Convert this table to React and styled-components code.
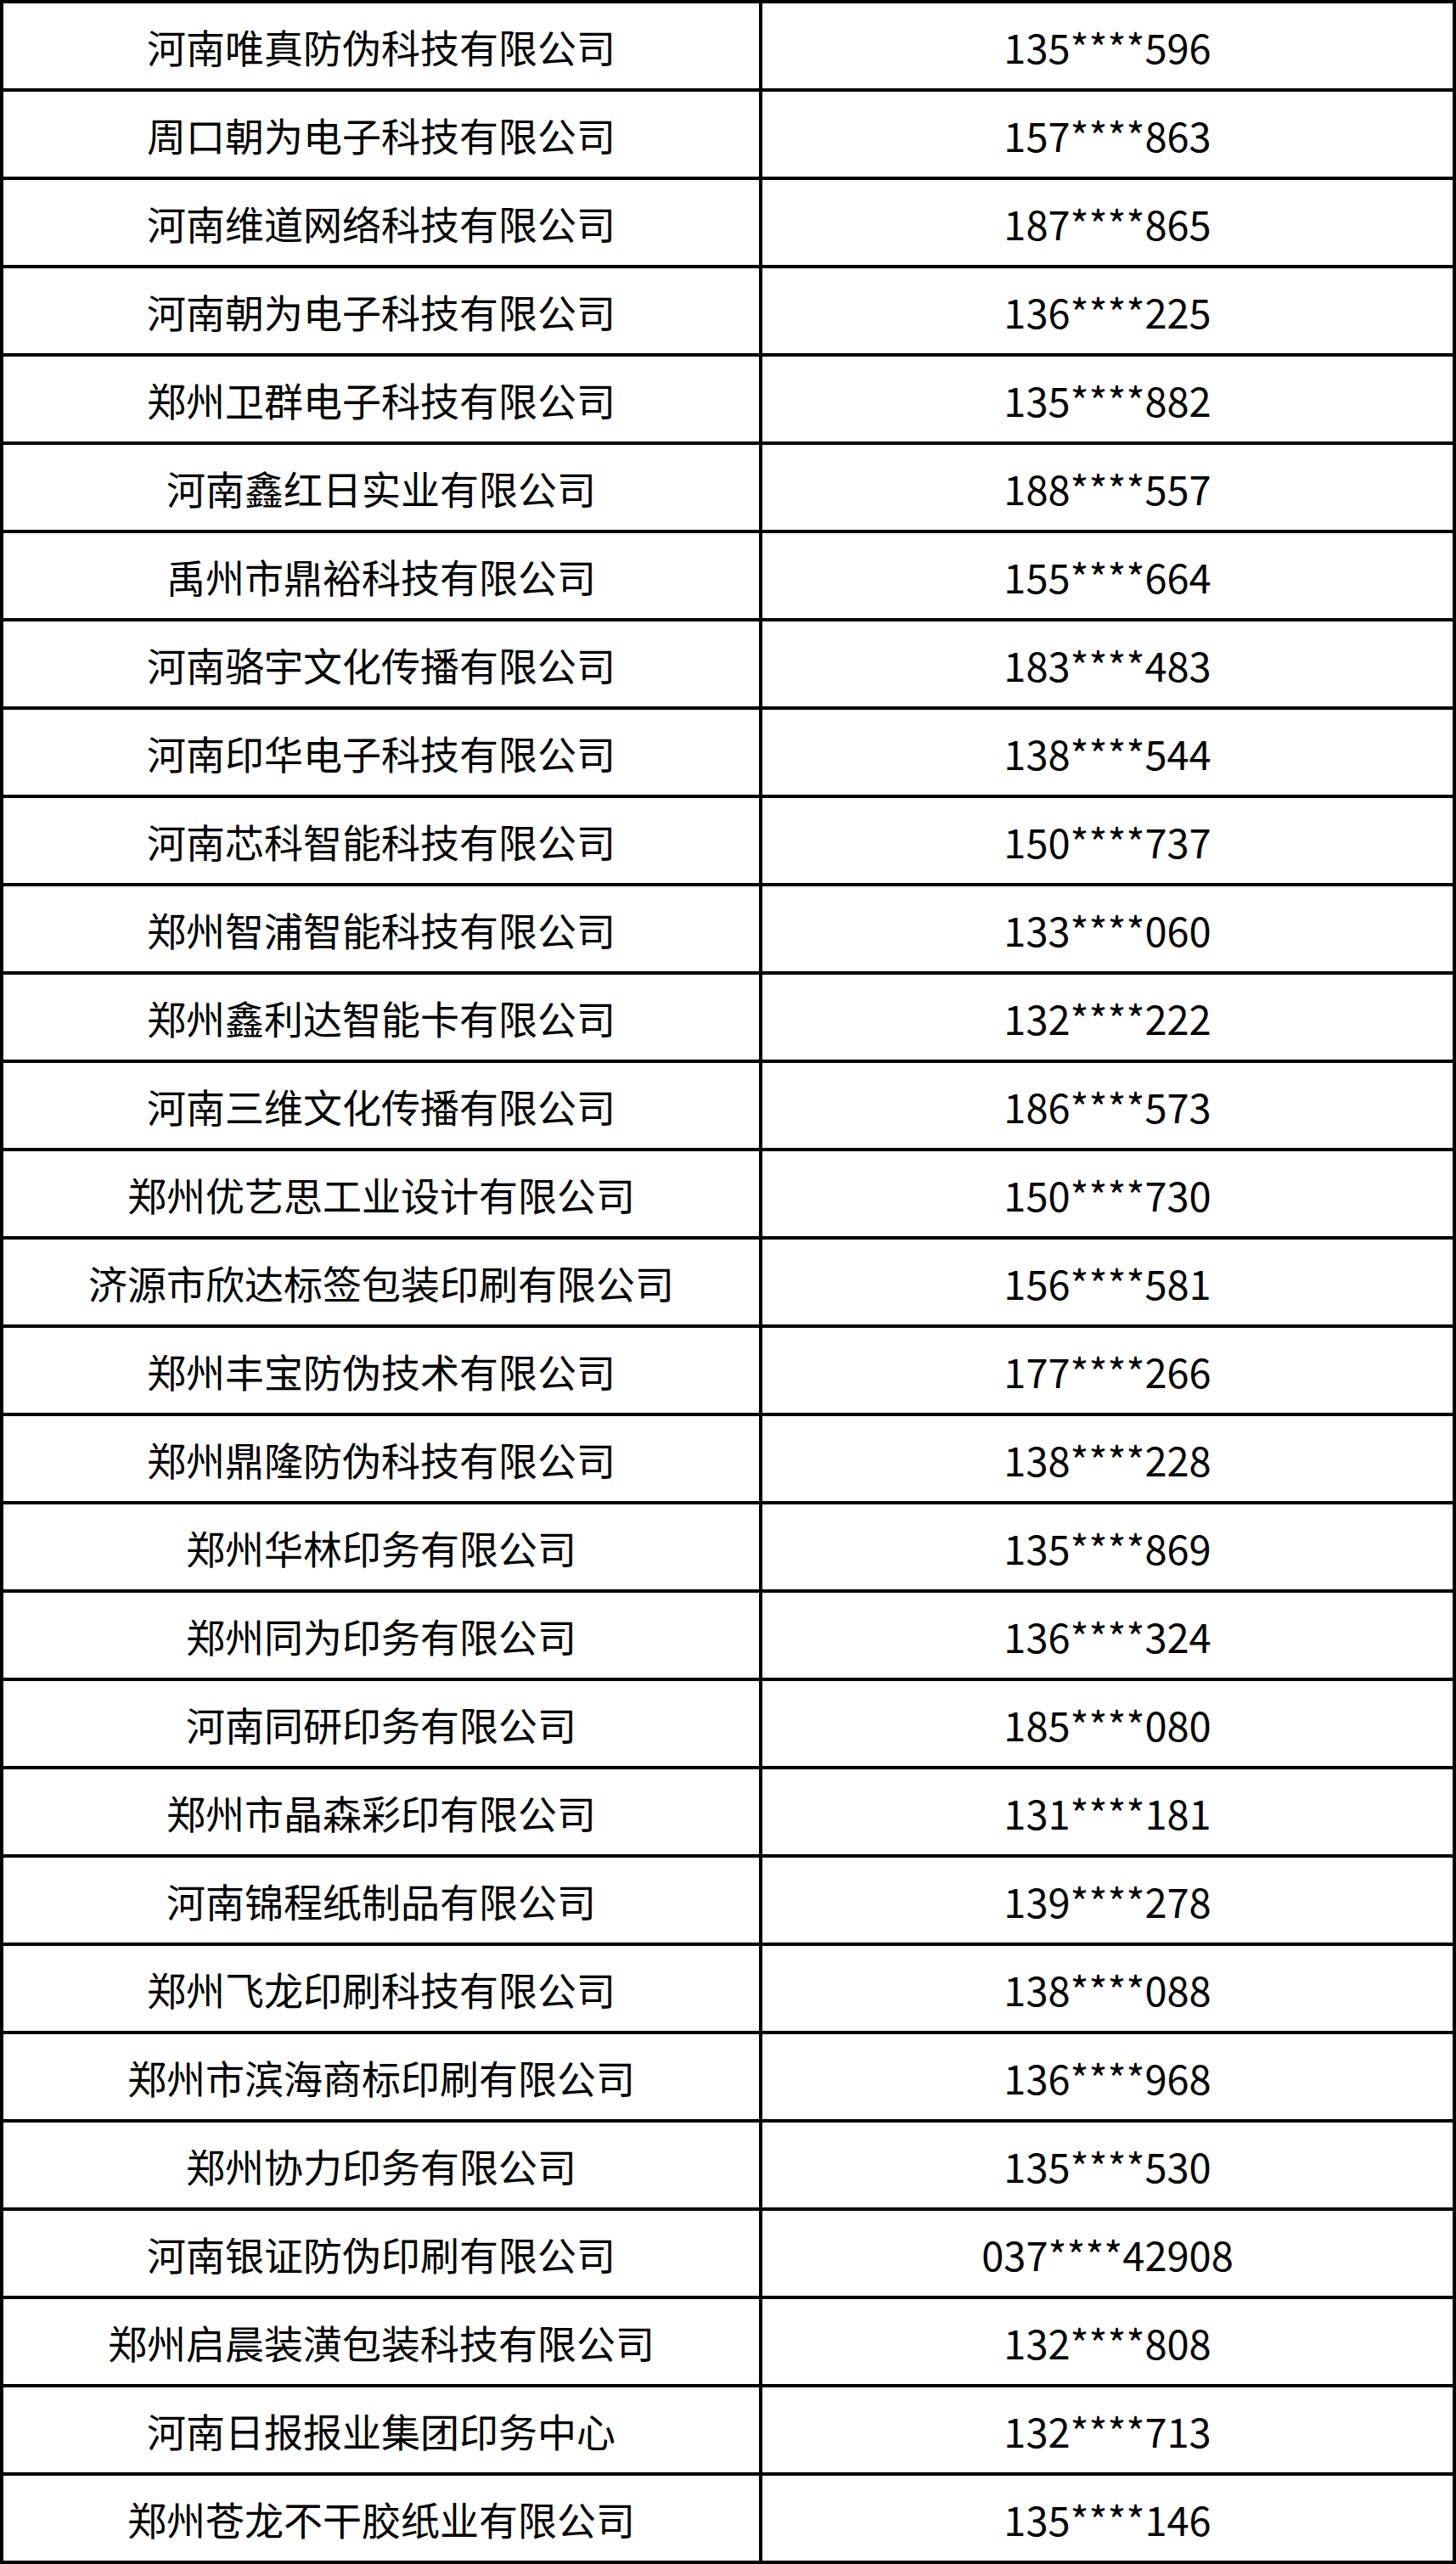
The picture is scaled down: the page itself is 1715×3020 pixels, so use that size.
import React from "react";
import styled, { createGlobalStyle } from "styled-components";

const rows = [
  ["河南唯真防伪科技有限公司", "135****596"],
  ["周口朝为电子科技有限公司", "157****863"],
  ["河南维道网络科技有限公司", "187****865"],
  ["河南朝为电子科技有限公司", "136****225"],
  ["郑州卫群电子科技有限公司", "135****882"],
  ["河南鑫红日实业有限公司", "188****557"],
  ["禹州市鼎裕科技有限公司", "155****664"],
  ["河南骆宇文化传播有限公司", "183****483"],
  ["河南印华电子科技有限公司", "138****544"],
  ["河南芯科智能科技有限公司", "150****737"],
  ["郑州智浦智能科技有限公司", "133****060"],
  ["郑州鑫利达智能卡有限公司", "132****222"],
  ["河南三维文化传播有限公司", "186****573"],
  ["郑州优艺思工业设计有限公司", "150****730"],
  ["济源市欣达标签包装印刷有限公司", "156****581"],
  ["郑州丰宝防伪技术有限公司", "177****266"],
  ["郑州鼎隆防伪科技有限公司", "138****228"],
  ["郑州华林印务有限公司", "135****869"],
  ["郑州同为印务有限公司", "136****324"],
  ["河南同研印务有限公司", "185****080"],
  ["郑州市晶森彩印有限公司", "131****181"],
  ["河南锦程纸制品有限公司", "139****278"],
  ["郑州飞龙印刷科技有限公司", "138****088"],
  ["郑州市滨海商标印刷有限公司", "136****968"],
  ["郑州协力印务有限公司", "135****530"],
  ["河南银证防伪印刷有限公司", "037****42908"],
  ["郑州启晨装潢包装科技有限公司", "132****808"],
  ["河南日报报业集团印务中心", "132****713"],
  ["郑州苍龙不干胶纸业有限公司", "135****146"],
];

const GlobalStyle = createGlobalStyle`
  body {
    margin: 0;
    background: #fff;
  }
`;

const Table = styled.div`
  display: grid;
  grid-template-columns: 890px 813px;
  grid-auto-rows: 100px;
  gap: 4px;
  padding: 4px;
  width: 1715px;
  box-sizing: border-box;
  background: #000;
`;

const Cell = styled.div`
  display: flex;
  align-items: center;
  justify-content: center;
  background: #fff;
  color: #000;
  font-family: "Noto Sans CJK SC", "Noto Sans", sans-serif;
  font-size: ${(p) => (p.num ? "47px" : "46px")};
  white-space: nowrap;
`;

export default function App() {
  return (
    <>
      <GlobalStyle />
      <Table>
        {rows.map(([name, phone]) => (
          <React.Fragment key={name}>
            <Cell>{name}</Cell>
            <Cell num>{phone}</Cell>
          </React.Fragment>
        ))}
      </Table>
    </>
  );
}
